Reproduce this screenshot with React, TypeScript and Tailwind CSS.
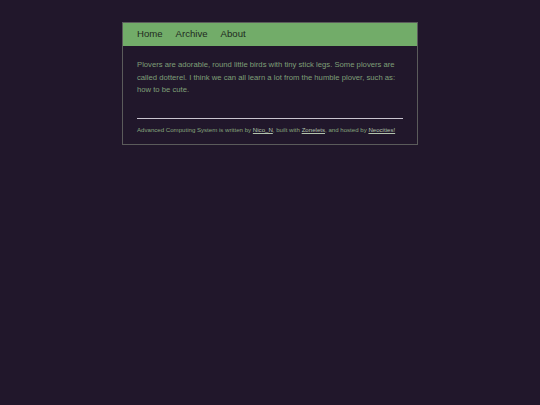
export default function App() {
  return (
    <div
      className="min-h-[405px] w-full bg-[#21172b] pt-[22px]"
      style={{ fontFamily: '"Liberation Sans", Arial, sans-serif' }}
    >
      <div className="mx-auto w-[296px] border border-[#5b5b5b] bg-[#21172b]">
        <nav className="flex h-[23px] items-center gap-[13px] bg-[#72ac69] px-[14px] text-[9.6px] text-[#1f2a1e]">
          <a>Home</a>
          <a>Archive</a>
          <a>About</a>
        </nav>
        <div className="px-[14px] pb-[10px] pt-[13px]">
          <p className="text-[7.7px] leading-[12.5px] text-[#7f9f78]">
            Plovers are adorable, round little birds with tiny stick legs. Some plovers are
            called dotterel. I think we can all learn a lot from the humble plover, such as:
            how to be cute.
          </p>
          <hr className="mt-[21px] border-t border-[#c9c4cf]" />
          <p className="mt-[6px] text-[6.1px] leading-[9px] text-[#86a47c]">
            Advanced Computing System is written by{" "}
            <a className="text-[#b3c3ad] underline">Nico_N</a>, built with{" "}
            <a className="text-[#b3c3ad] underline">Zonelets</a>, and hosted by{" "}
            <a className="text-[#b3c3ad] underline">Neocities!</a>
          </p>
        </div>
      </div>
    </div>
  );
}
